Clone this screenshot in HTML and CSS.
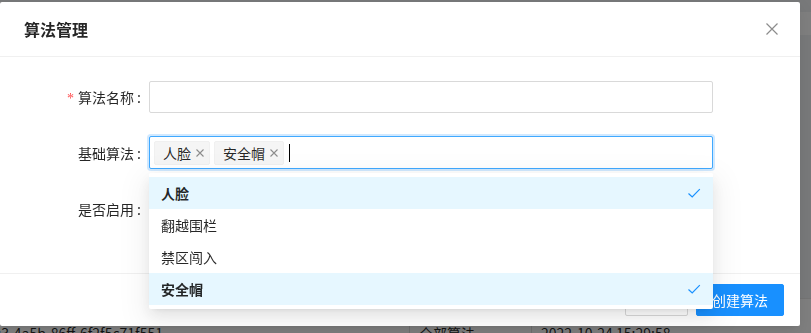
FILE: index.html
```html
<!DOCTYPE html>
<html lang="zh-CN">
<head>
    <meta charset="UTF-8">
    <meta name="viewport" content="width=device-width, initial-scale=1.0">
    <title>算法管理</title>
    <link rel="stylesheet" href="styles.css">
</head>
<body>
    <div class="page">
        <div class="page-band"></div>
        <div class="table-row">
            <div class="cell cell-id">c3-4a5b-86ff-6f2f5c71f551</div>
            <div class="cell cell-algo">全部算法</div>
            <div class="cell cell-time">2022-10-24 15:29:58</div>
        </div>
    </div>

    <div class="mask"></div>

    <div class="modal">
        <div class="modal-header">
            <div class="modal-title">算法管理</div>
            <button class="modal-close" type="button">
                <svg width="14" height="14" viewBox="0 0 14 14">
                    <path d="M1.5 1.5 L12.5 12.5 M12.5 1.5 L1.5 12.5" stroke="#8c8c8c" stroke-width="1.2" fill="none"/>
                </svg>
            </button>
        </div>

        <div class="modal-body">
            <div class="form-item">
                <label class="form-label"><span class="required">*</span>算法名称</label>
                <div class="form-control">
                    <input class="text-input" type="text">
                </div>
            </div>

            <div class="form-item">
                <label class="form-label">基础算法</label>
                <div class="form-control select-wrap">
                    <div class="select focused">
                        <span class="tag">人脸
                            <svg class="tag-close" width="10" height="10" viewBox="0 0 10 10">
                                <path d="M1.5 1.5 L8.5 8.5 M8.5 1.5 L1.5 8.5" stroke="#8c8c8c" stroke-width="1.1" fill="none"/>
                            </svg>
                        </span>
                        <span class="tag">安全帽
                            <svg class="tag-close" width="10" height="10" viewBox="0 0 10 10">
                                <path d="M1.5 1.5 L8.5 8.5 M8.5 1.5 L1.5 8.5" stroke="#8c8c8c" stroke-width="1.1" fill="none"/>
                            </svg>
                        </span>
                        <span class="caret"></span>
                    </div>

                    <div class="dropdown">
                        <div class="option selected">
                            <span>人脸</span>
                            <svg class="check" width="14" height="14" viewBox="0 0 14 14">
                                <path d="M1.5 7.5 L5.2 11 L12.8 3.2" stroke="#1890ff" stroke-width="1.2" fill="none"/>
                            </svg>
                        </div>
                        <div class="option"><span>翻越围栏</span></div>
                        <div class="option"><span>禁区闯入</span></div>
                        <div class="option selected">
                            <span>安全帽</span>
                            <svg class="check" width="14" height="14" viewBox="0 0 14 14">
                                <path d="M1.5 7.5 L5.2 11 L12.8 3.2" stroke="#1890ff" stroke-width="1.2" fill="none"/>
                            </svg>
                        </div>
                    </div>
                </div>
            </div>

            <div class="form-item">
                <label class="form-label">是否启用</label>
                <div class="form-control">
                    <span class="switch"></span>
                </div>
            </div>
        </div>

        <div class="modal-footer">
            <button class="btn" type="button">取 消</button>
            <button class="btn btn-primary" type="button">创建算法</button>
        </div>
    </div>
</body>
</html>
```

FILE: styles.css
```css
* {
    box-sizing: border-box;
}
body {
    margin: 0;
    height: 333px;
    overflow: hidden;
    font-family: "Noto Sans CJK SC", "Noto Sans", sans-serif;
    font-size: 14px;
    color: rgba(0, 0, 0, 0.85);
    background-color: #f0f2f5;
}

/* page underneath the modal */
.page {
    padding-top: 12px;
}
.page-band {
    height: 23px;
    background-color: #fff;
}
.table-row {
    display: flex;
    margin-top: 263px;
    padding-top: 23px;
    height: 35px;
    overflow: hidden;
    border-top: 1px solid #e8e8e8;
    background-color: #fff;
    line-height: 22px;
}
.cell {
    white-space: nowrap;
}
.cell-id {
    width: 415px;
    margin-left: -6px;
}
.cell-algo {
    width: 122px;
    padding-left: 9px;
    border-left: 1px solid #e0e0e0;
}
.cell-time {
    padding-left: 9px;
    border-left: 1px solid #e0e0e0;
}
.mask {
    position: fixed;
    inset: 0;
    background-color: rgba(0, 0, 0, 0.5);
}

/* modal */
.modal {
    position: absolute;
    top: 2px;
    left: 0;
    width: 800px;
    background-color: #fff;
    border-radius: 2px;
    box-shadow: 0 3px 6px -4px rgba(0, 0, 0, 0.12), 0 6px 16px 0 rgba(0, 0, 0, 0.08);
}
.modal-header {
    display: flex;
    align-items: center;
    justify-content: space-between;
    height: 55px;
    padding: 0 24px;
    border-bottom: 1px solid #f0f0f0;
}
.modal-title {
    font-size: 16px;
    font-weight: 600;
    line-height: 22px;
}
.modal-close {
    display: flex;
    align-items: center;
    justify-content: center;
    width: 56px;
    height: 54px;
    margin-right: -24px;
    padding: 0;
    border: none;
    background: none;
}
.modal-body {
    padding: 24px;
}
.form-item {
    display: flex;
    height: 32px;
    margin-bottom: 24px;
}
.form-item:last-child {
    margin-bottom: 24px;
}
.form-label {
    width: 125px;
    padding-right: 8px;
    text-align: right;
    line-height: 32px;
    white-space: nowrap;
}
.form-label::after {
    content: ":";
    margin: 0 0 0 3px;
}
.required {
    margin-right: 4px;
    color: #ff4d4f;
    font-family: "Liberation Serif", serif;
}
.form-control {
    width: 564px;
}
.text-input {
    display: block;
    width: 100%;
    height: 32px;
    padding: 4px 11px;
    border: 1px solid #d9d9d9;
    border-radius: 2px;
    font: inherit;
}
.select-wrap {
    position: relative;
    margin-top: -1px;
}
.select {
    display: flex;
    align-items: center;
    height: 33px;
    padding: 1px 4px;
    border: 1px solid #d9d9d9;
    border-radius: 2px;
    background-color: #fff;
}
.select.focused {
    border-color: #40a9ff;
    box-shadow: 0 0 0 2px rgba(24, 144, 255, 0.2);
}
.tag {
    display: inline-flex;
    align-items: center;
    height: 24px;
    margin-right: 4px;
    padding: 0 4px 0 8px;
    background-color: #f5f5f5;
    border: 1px solid #f0f0f0;
    border-radius: 2px;
    line-height: 22px;
}
.tag-close {
    margin-left: 4px;
}
.caret {
    display: inline-block;
    width: 1px;
    height: 18px;
    margin-left: 1px;
    background-color: #000;
}
.switch {
    display: inline-block;
    width: 44px;
    height: 22px;
    margin-top: 5px;
    border-radius: 11px;
    background-color: #bfbfbf;
}

/* select dropdown */
.dropdown {
    position: absolute;
    top: 37px;
    left: 0;
    z-index: 10;
    width: 564px;
    padding: 4px 0;
    background-color: #fff;
    border-radius: 2px;
    box-shadow: 0 3px 6px -4px rgba(0, 0, 0, 0.12), 0 6px 16px 0 rgba(0, 0, 0, 0.08), 0 9px 28px 8px rgba(0, 0, 0, 0.05);
}
.option {
    display: flex;
    align-items: center;
    justify-content: space-between;
    height: 32px;
    padding: 5px 12px;
    line-height: 22px;
}
.option.selected {
    background-color: #e6f7ff;
    font-weight: 600;
}

/* footer */
.modal-footer {
    display: flex;
    justify-content: flex-end;
    gap: 8px;
    padding: 10px 16px;
    border-top: 1px solid #f0f0f0;
}
.btn {
    height: 32px;
    padding: 4px 15px;
    border: 1px solid #d9d9d9;
    border-radius: 2px;
    background-color: #fff;
    font: inherit;
    line-height: 22px;
    color: rgba(0, 0, 0, 0.85);
}
.btn-primary {
    background-color: #1890ff;
    border-color: #1890ff;
    color: #fff;
}
```
